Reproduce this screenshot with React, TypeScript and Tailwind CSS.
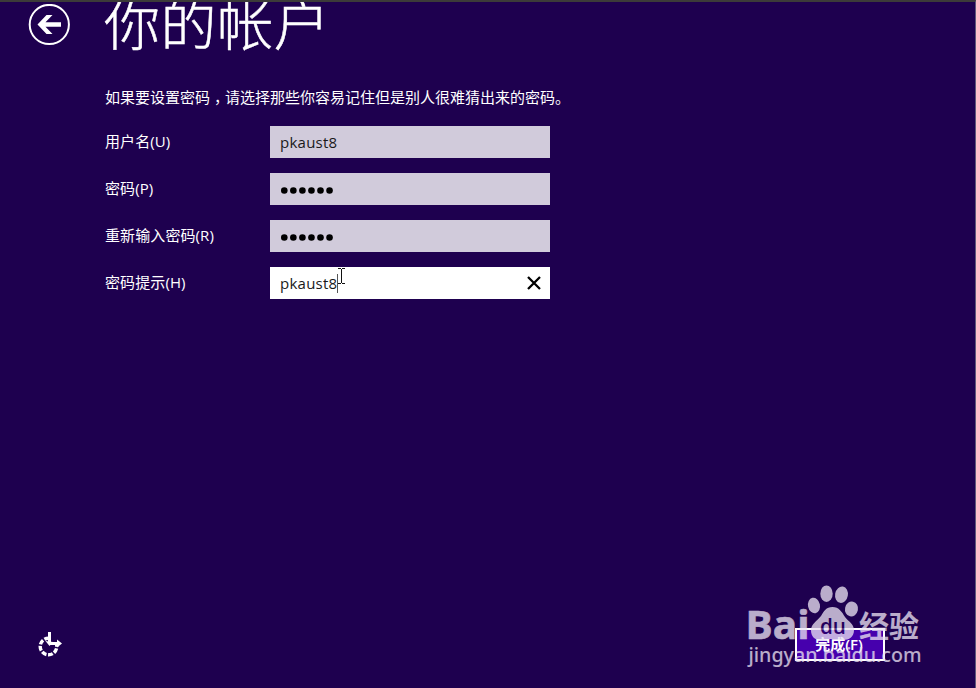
import React from "react";

type Field = { label: string; kind: "text" | "password" | "active" };

const fields: Field[] = [
  { label: "用户名(U)", kind: "text" },
  { label: "密码(P)", kind: "password" },
  { label: "重新输入密码(R)", kind: "password" },
  { label: "密码提示(H)", kind: "active" },
];

function BackButton() {
  return (
    <svg className="mt-[4px] ml-[28px] h-[42px] w-[42px] shrink-0" viewBox="0 0 42 42" fill="none">
      <circle cx="21.3" cy="20.5" r="19.6" stroke="#fff" strokeWidth="2" />
      <path d="M9.5 20.5 18.5 11H24.500L17.5 18.2H33V22.8H17.5L24.500 30H18.5Z" fill="#fff" />
    </svg>
  );
}

function Dots() {
  return (
    <svg className="mt-[2px] h-[8px] w-[56px]" viewBox="0 0 56 8">
      {[0, 1, 2, 3, 4, 5].map((i) => (
        <circle key={i} cx={4.3 + i * 9.05} cy="4.5" r="3.3" fill="#000" />
      ))}
    </svg>
  );
}

function FieldRow({ label, kind }: Field) {
  const active = kind === "active";
  return (
    <div className="flex h-[32px] items-center">
      <div className="w-[165px] pb-[2px] text-[15px] leading-[30px] tracking-[0.1px]">{label}</div>
      <div
        className={
          active
            ? "relative flex h-[32px] w-[280px] items-center bg-white pl-[10px] text-[#1a1a1a]"
            : "relative flex h-[32px] w-[280px] items-center bg-[#d1cbdb] pl-[10px] text-[#1a1a1a]"
        }
      >
        {kind === "password" ? (
          <Dots />
        ) : (
          <span className="text-[15px] leading-[32px] tracking-[0.25px]">pkaust8</span>
        )}
        {active && (
          <>
            <svg className="absolute top-0 left-[66px] h-[32px] w-[12px]" viewBox="0 0 12 32" fill="none" shapeRendering="crispEdges">
              <path d="M1.5 7V26" stroke="#555" />
              <path d="M2 1.5H4.500M6 1.5H9M5.500 2V16M2 16.500H5M6 16.500H9" stroke="#111" />
            </svg>
            <svg className="absolute top-[9px] left-[257px] h-[14px] w-[14px]" viewBox="0 0 14 14">
              <path d="M1 1 13 13M13 1 1 13" stroke="#000" strokeWidth="2.3" />
            </svg>
          </>
        )}
      </div>
    </div>
  );
}

function EaseOfAccess() {
  return (
    <svg className="h-[28px] w-[28px]" viewBox="0 0 28 28" fill="none">
      <circle cx="13.500" cy="16.500" r="8.300" stroke="#fff" strokeWidth="3.4" strokeDasharray="4.900 1.620" strokeDashoffset="-2" />
      <path d="M14 6H25V15H14Z" fill="#1e004f" />
      <path d="M14.500 2V13.500M14 13.500H23" stroke="#fff" strokeWidth="3" />
      <path d="M10.500 11 14.500 16 18 12M22 9.500 27 13.500 22 17.500Z" fill="#fff" />
    </svg>
  );
}

function Watermark() {
  return (
    <svg
      className="pointer-events-none absolute top-[578px] left-[742px] h-[90px] w-[190px] font-['Open_Sans','Noto_Sans_CJK_SC',sans-serif]"
      viewBox="0 0 190 90"
      fill="#e9e2f1"
      opacity="0.77"
    >
      <text x="3.500" y="58.500" fontSize="39" fontWeight="700" stroke="#e9e2f1" strokeWidth="0.6" textLength="64" lengthAdjust="spacingAndGlyphs">Bai</text>
      <ellipse cx="72" cy="25.500" rx="6" ry="7.800" transform="rotate(-12 72 25.500)" />
      <ellipse cx="84.500" cy="13.700" rx="6.200" ry="8.300" />
      <ellipse cx="99.500" cy="14.700" rx="6.400" ry="8.300" transform="rotate(10 99.500 14.700)" />
      <ellipse cx="109.500" cy="29" rx="6.500" ry="7.500" transform="rotate(12 109.500 29)" />
      <path d="M90.500 27C97 27 100 32 103 37C106 41 112 44 112 50C112 57 107 60 101 60C96 60 94 59 90 59C86 59 84 60 79 60C73 60 69 57 69 50C69 44 75 41 79 36C82 31 84 27 90.500 27Z" />
      <text x="78" y="53.500" fontSize="22" fontWeight="600" fill="#270060" textLength="26" lengthAdjust="spacingAndGlyphs">du</text>
      <text x="117" y="56.500" fontSize="29.500" fontWeight="700" textLength="60" lengthAdjust="spacingAndGlyphs">经验</text>
      <text className="font-['Noto_Sans',sans-serif]" x="6.500" y="82" fontSize="20" fontWeight="500" textLength="173" lengthAdjust="spacingAndGlyphs">jingyan.baidu.com</text>
    </svg>
  );
}

export default function App() {
  return (
    <div className="relative flex h-[688px] w-[976px] flex-col overflow-hidden border-t-2 border-r border-t-[#3c3b39] border-r-[#5f587a] bg-[#1e004f] font-['Open_Sans','Noto_Sans_CJK_SC',sans-serif] text-white">
      <header className="flex h-[83px] items-start">
        <div className="-mt-[2px]"><BackButton /></div>
        <h1 className="ml-[34px] -mt-[13px] font-['Noto_Sans_CJK_SC',sans-serif] text-[56px] leading-[64px] font-light tracking-[0.6px] [-webkit-text-stroke:0.5px_white]">你的帐户</h1>
      </header>
      <main className="ml-[105px] flex flex-1 flex-col">
        <p className="h-[41px] font-['Noto_Sans_CJK_SC',sans-serif] text-[15px] leading-[23px] whitespace-nowrap">
          如果要设置密码<span className="-mr-[4px] pl-[4px]">，</span>请选择那些你容易记住但是别人很难猜出来的密码。
        </p>
        <div className="flex flex-col gap-[15px]">
          {fields.map((f) => (
            <FieldRow key={f.label} {...f} />
          ))}
        </div>
      </main>
      <footer className="mb-[27px] flex h-[34px] items-center justify-between pr-[90px] pl-[35px]">
        <EaseOfAccess />
        <button className="h-[33px] w-[90px] border-2 border-white bg-[#4600ad] pr-[2px] text-[15px] leading-[27px] font-semibold">完成(F)</button>
      </footer>
      <Watermark />
    </div>
  );
}
